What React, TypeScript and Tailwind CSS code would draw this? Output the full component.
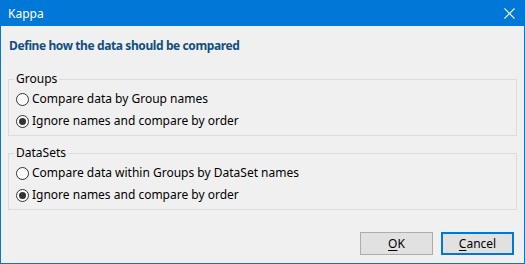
import React, { useState } from "react";

const font = { fontFamily: '"Noto Sans", "Open Sans", sans-serif' };

const Radio = ({ checked, label, onClick }: { checked: boolean; label: string; onClick: () => void }) => (
  <div className="flex items-center h-[22px] cursor-default" onClick={onClick}>
    <div className="w-[13px] h-[13px] rounded-full border border-[#333333] bg-white flex items-center justify-center">
      {checked && <div className="w-[7px] h-[7px] rounded-full bg-[#333333]" />}
    </div>
    <span className="ml-[3px] text-[12px] text-black leading-none">{label}</span>
  </div>
);

const GroupBox = ({ title, children }: { title: string; children: React.ReactNode }) => (
  <div className="relative mx-[7px] border border-[#dcdcdc] pt-[8px] pb-[3px] pl-[7px]">
    <span className="absolute -top-[9px] left-[5px] bg-[#f0f0f0] px-[2px] text-[12px] leading-[16px] text-black">
      {title}
    </span>
    {children}
  </div>
);

export default function App() {
  const [groups, setGroups] = useState(1);
  const [datasets, setDatasets] = useState(1);

  return (
    <div style={font} className="w-[525px] h-[264px] border border-[#0078d7] bg-[#f0f0f0] flex flex-col">
      <div className="h-[25px] bg-[#0078d7] flex items-center justify-between pl-[7px] pr-[9px]">
        <span className="text-white text-[12px] leading-none">Kappa</span>
        <svg width="11" height="11" viewBox="0 0 11 11">
          <path d="M0.5 0.5 L10.5 10.5 M10.5 0.5 L0.5 10.5" stroke="white" strokeWidth="1.1" />
        </svg>
      </div>

      <div className="pl-[8px] pt-[6px] h-[53px]">
        <span className="text-[12px] font-bold tracking-[-0.4px] text-[#124d80]">
          Define how the data should be compared
        </span>
      </div>

      <GroupBox title="Groups">
        <Radio checked={groups === 0} label="Compare data by Group names" onClick={() => setGroups(0)} />
        <Radio checked={groups === 1} label="Ignore names and compare by order" onClick={() => setGroups(1)} />
      </GroupBox>

      <div className="h-[17px]" />

      <GroupBox title="DataSets">
        <Radio checked={datasets === 0} label="Compare data within Groups by DataSet names" onClick={() => setDatasets(0)} />
        <Radio checked={datasets === 1} label="Ignore names and compare by order" onClick={() => setDatasets(1)} />
      </GroupBox>

      <div className="flex justify-end gap-[8px] pr-[10px] mt-[22px]">
        <button className="w-[73px] h-[23px] bg-[#e1e1e1] border border-[#adadad] text-[12px] text-black">
          <span className="underline underline-offset-2">O</span>K
        </button>
        <button className="w-[73px] h-[23px] bg-[#e1e1e1] border-2 border-[#0078d7] text-[12px] text-black">
          <span className="underline underline-offset-2">C</span>ancel
        </button>
      </div>
    </div>
  );
}
